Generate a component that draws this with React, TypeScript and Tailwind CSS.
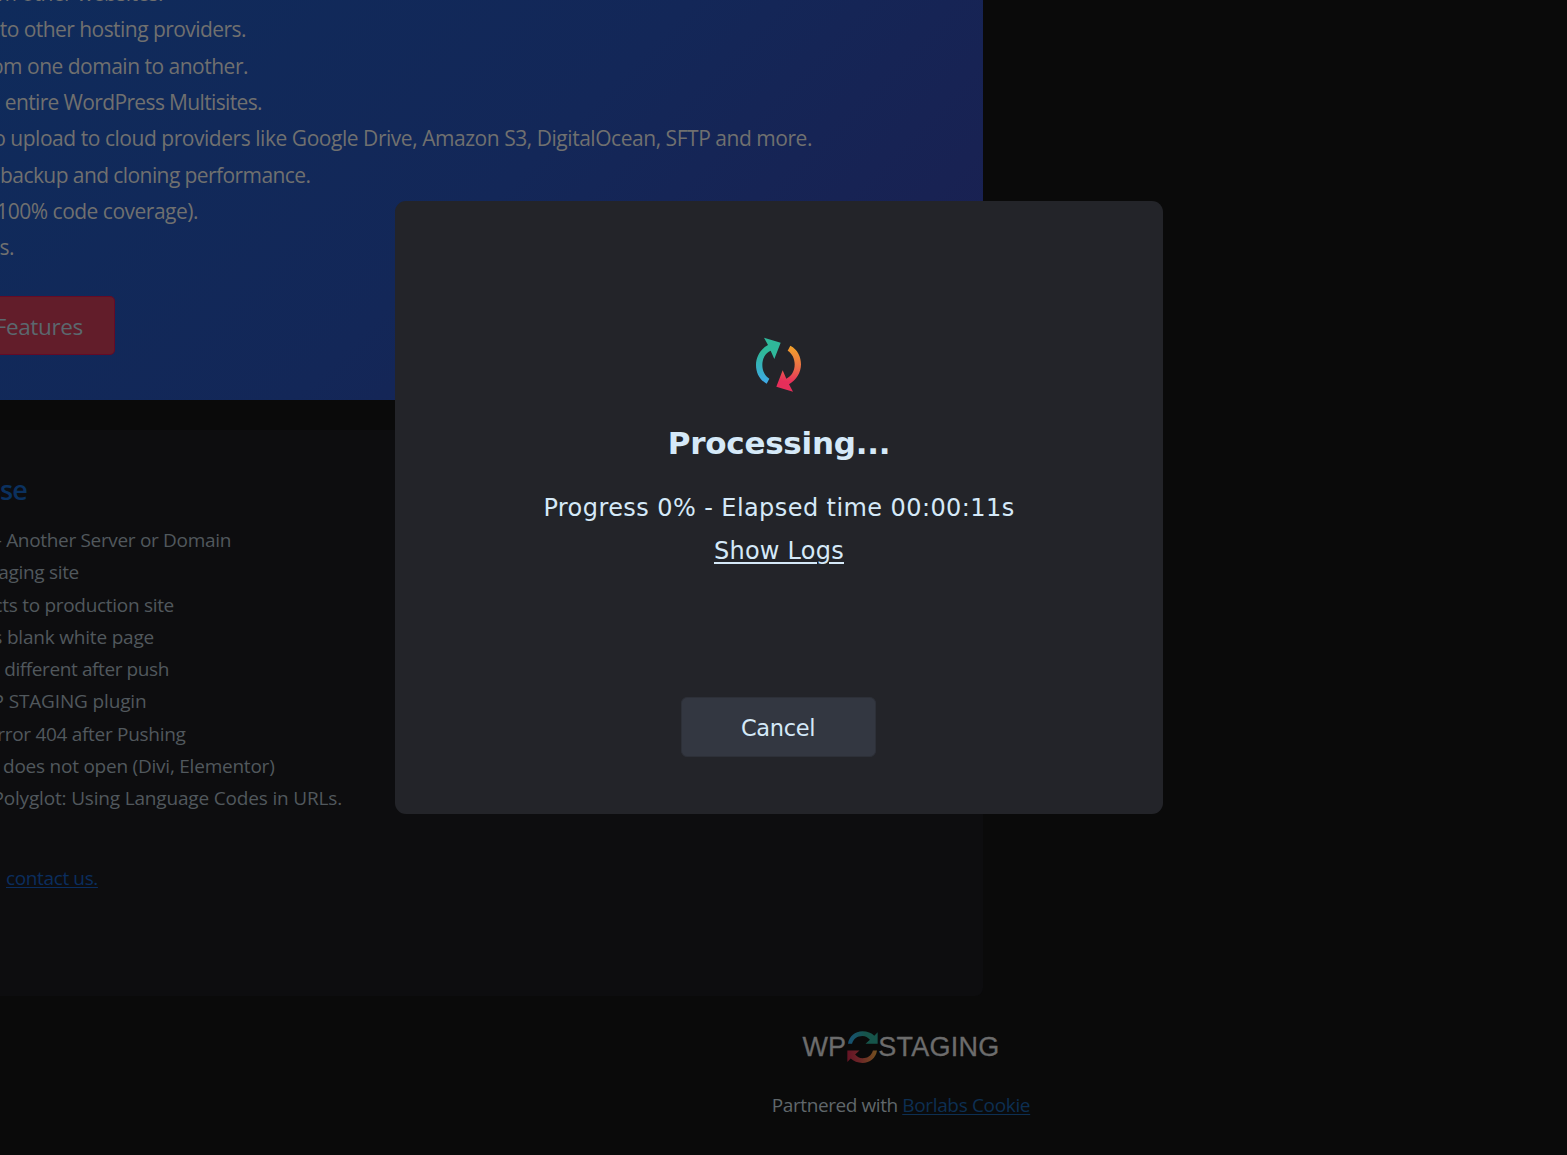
type Line = { text: string; box: string };

const features: Line[] = [
  { text: 'm other websites.', box: 'w-[163px] tracking-[-0.55px]' },
  { text: 'to other hosting providers.', box: 'w-[246px] tracking-[-0.55px]' },
  { text: 'om one domain to another.', box: 'w-[248px] tracking-[-0.5px]' },
  { text: 'entire WordPress Multisites.', box: 'w-[262px] tracking-[-0.64px]' },
  {
    text: 'o upload to cloud providers like Google Drive, Amazon S3, DigitalOcean, SFTP and more.',
    box: 'w-[812px] tracking-[-0.46px]',
  },
  { text: 'backup and cloning performance.', box: 'w-[310.5px] tracking-[-0.58px]' },
  { text: '100% code coverage).', box: 'w-[198px] tracking-[-0.5px]' },
  { text: 'ts.', box: 'w-[14px] tracking-[-0.5px]' },
];

const articles: Line[] = [
  { text: '- Another Server or Domain', box: 'w-[231px] tracking-[-0.32px]' },
  { text: 'aging site', box: 'w-[79px] tracking-[-0.3px]' },
  { text: 'cts to production site', box: 'w-[174px] tracking-[-0.3px]' },
  { text: 's blank white page', box: 'w-[154px] tracking-[-0.2px]' },
  { text: 'different after push', box: 'w-[169px] tracking-[-0.4px]' },
  { text: 'P STAGING plugin', box: 'w-[146.5px] tracking-[-0.15px]' },
  { text: 'rror 404 after Pushing', box: 'w-[185.5px] tracking-[-0.3px]' },
  { text: 'does not open (Divi, Elementor)', box: 'w-[274.5px] tracking-[-0.23px]' },
  { text: 'Polyglot: Using Language Codes in URLs.', box: 'w-[342px] tracking-[-0.17px]' },
];

function SpinnerIcon() {
  const arc =
    'M80,176 C58,165 48,142 48,120 C48,95 62,72 84,60 L72,38 L122,53 L103,102 L92,77 C76,84 67,100 67,120 C67,138 75,153 88,161 Z';
  return (
    <svg className="ml-[2px] size-20" viewBox="0 0 240 240" aria-hidden="true">
      <defs>
        <linearGradient id="spin-cool" gradientUnits="userSpaceOnUse" x1="100" y1="50" x2="80" y2="176">
          <stop offset="0.3" stopColor="#2fb89a" />
          <stop offset="1" stopColor="#3fa9e8" />
        </linearGradient>
        <linearGradient id="spin-warm" gradientUnits="userSpaceOnUse" x1="100" y1="50" x2="80" y2="176">
          <stop offset="0.15" stopColor="#e62e5a" />
          <stop offset="0.5" stopColor="#ea6a48" />
          <stop offset="1" stopColor="#f2a32a" />
        </linearGradient>
      </defs>
      <path d={arc} fill="url(#spin-cool)" />
      <path d={arc} fill="url(#spin-warm)" transform="rotate(180 115.5 119)" />
    </svg>
  );
}

function LogoIcon() {
  const arc =
    'M3,38 C6,16 24,1 46,1 C60,1 73,6 81,14 L91,4 L91,38 L55,38 L68,26 C62,19 55,15 46,15 C31,15 19,23 15,38 Z';
  return (
    <svg className="ml-[0.5px] h-[33px] w-[31px] shrink-0" viewBox="0 0 92 98" aria-hidden="true">
      <defs>
        <linearGradient id="logo-cool" x1="0" x2="1">
          <stop offset="0" stopColor="#175276" />
          <stop offset="0.6" stopColor="#16544a" />
        </linearGradient>
        <linearGradient id="logo-warm" x1="0" x2="1">
          <stop offset="0" stopColor="#73511f" />
          <stop offset="0.6" stopColor="#6c2427" />
          <stop offset="1" stopColor="#651425" />
        </linearGradient>
      </defs>
      <path d={arc} fill="url(#logo-cool)" />
      <path d={arc} fill="url(#logo-warm)" transform="rotate(180 46 48)" />
    </svg>
  );
}

function EndAlignedLine({ text, box }: Line) {
  return (
    <li className={`flex justify-end whitespace-nowrap ${box}`}>
      <span>{text}</span>
    </li>
  );
}

export default function App() {
  return (
    <div className="relative h-[1155px] w-full overflow-hidden bg-[#0a0a0a] font-['Open_Sans','Noto_Sans',sans-serif]">
      <main className="flex w-[983px] flex-col gap-[30px]">
        <section className="h-[400px] overflow-hidden bg-[linear-gradient(135deg,#0f2b5b_0%,#132758_50%,#1b1f50_100%)]">
          <ul className="-mt-[25px] text-[21px] leading-[36.33px] text-[#70706f]">
            {features.map((f) => (
              <EndAlignedLine key={f.text} {...f} />
            ))}
          </ul>
          <button className="mt-[30px] flex h-[59px] w-[115px] items-center justify-end rounded-r-[5px] border border-l-0 border-[#650b26] bg-[#621d2a] pr-[31px] pt-[3px] text-[22.5px] tracking-[-0.35px] text-[#5b686e]">
            <span>Features</span>
          </button>
        </section>

        <section className="h-[566px] overflow-hidden rounded-br-[8px] bg-[#0d0d0f] pt-[41px]">
          <h2 className="flex w-[27px] justify-end whitespace-nowrap text-[27px] leading-[38px] font-semibold tracking-[-0.9px] text-[#0b315f]">
            <span>se</span>
          </h2>
          <ul className="mt-[15px] text-[19px] leading-[32.25px] text-[#51585d]">
            {articles.map((a) => (
              <EndAlignedLine key={a.text} {...a} />
            ))}
          </ul>
          <p className="mt-[48px] pl-[6px] text-[19px] leading-[32px]">
            <a className="tracking-[-0.37px] text-[#0b2d5e] underline decoration-1 underline-offset-[2px]">contact us.</a>
          </p>
        </section>
      </main>

      <footer className="ml-[771px] mt-[35px] flex w-[260px] flex-col items-center text-[19px]">
        <div className="flex items-center font-['Liberation_Sans',Arial,sans-serif] text-[27px] leading-[33px] text-[#6c6c6c] [-webkit-text-stroke:0.3px_#6c6c6c]">
          <span className="tracking-[0.1px]">WP</span>
          <LogoIcon />
          <span className="ml-[0.5px] tracking-[0.25px]">STAGING</span>
        </div>
        <p className="mt-[25px] leading-[32px] whitespace-nowrap text-[#60676b]">
          <span className="tracking-[-0.42px]">Partnered with </span>
          <a className="tracking-[-0.34px] text-[#0d2f52] underline decoration-1 underline-offset-[2px]">Borlabs Cookie</a>
        </p>
      </footer>

      <div className="absolute inset-0 flex items-start pl-[395px] pt-[201px]">
        <div
          role="dialog"
          className="flex h-[613px] w-[768px] flex-col items-center rounded-[11px] bg-[#232429] pt-[124px] font-['DejaVu_Sans',Verdana,sans-serif] text-[#d5e9f8]"
        >
          <SpinnerIcon />
          <h1 className="mt-[18px] text-[31px] leading-[40px] font-bold tracking-[-0.25px]">Processing...</h1>
          <p className="mt-[24px] text-[24px] leading-[43px] tracking-[0.42px]">Progress 0% - Elapsed time 00:00:11s</p>
          <a className="text-[24px] leading-[43px] tracking-[0.25px] underline decoration-2 underline-offset-[3px]">Show Logs</a>
          <button className="mr-[2px] mt-[124px] h-[60px] w-[195px] rounded-[6px] border border-[#2d3038] bg-[#333741] pt-[3px] text-[22.5px] tracking-[-0.35px]">
            Cancel
          </button>
        </div>
      </div>
    </div>
  );
}
